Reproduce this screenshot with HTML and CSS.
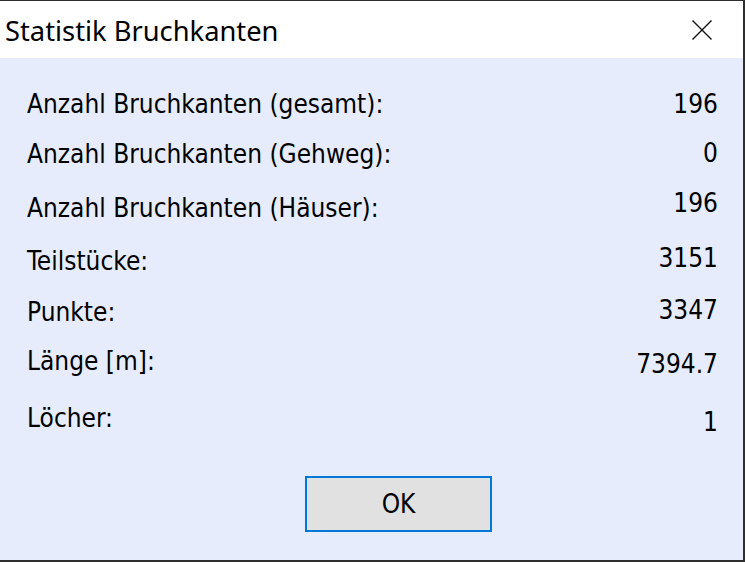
FILE: index.html
```html
<!DOCTYPE html>
<html lang="de">
<head>
<meta charset="utf-8">
<title>Statistik Bruchkanten</title>
<link rel="stylesheet" href="styles.css">
</head>
<body>
<div class="window">
  <div class="titlebar">
    <span class="title">Statistik Bruchkanten</span>
    <span class="close" aria-label="Schließen">
      <svg width="20" height="20" viewBox="0 0 20 20"><path d="M0.5 0.5 L19.5 19.5 M19.5 0.5 L0.5 19.5" stroke="#111" stroke-width="1.4" fill="none"/></svg>
    </span>
  </div>
  <div class="content">
    <div class="stats">
      <div class="labels">
        <div class="item">Anzahl Bruchkanten (gesamt):</div>
        <div class="item">Anzahl Bruchkanten (Gehweg):</div>
        <div class="item">Anzahl Bruchkanten (Häuser):</div>
        <div class="item">Teilstücke:</div>
        <div class="item">Punkte:</div>
        <div class="item">Länge [m]:</div>
        <div class="item">Löcher:</div>
      </div>
      <div class="values">
        <div class="item">196</div>
        <div class="item">0</div>
        <div class="item">196</div>
        <div class="item">3151</div>
        <div class="item">3347</div>
        <div class="item">7394.7</div>
        <div class="item">1</div>
      </div>
    </div>
    <div class="actions">
      <button class="ok" type="button">OK</button>
    </div>
  </div>
</div>
</body>
</html>
```
FILE: styles.css
```css
html, body {
  margin: 0;
  padding: 0;
  background: #2b2b2b;
}
.window {
  width: 743px;
  height: 559px;
  border-top: 1px solid #2e2e2e;
  border-right: 2px solid #2e2e2e;
  border-bottom: 2px solid #2e2e2e;
  background: #e6ecfc;
  display: flex;
  flex-direction: column;
  color: #000;
}
.titlebar {
  height: 57px;
  background: #ffffff;
  display: flex;
  align-items: center;
  justify-content: space-between;
  padding: 0 0 0 5px;
  flex: none;
}
.title {
  font-family: "Noto Sans", "Open Sans", sans-serif;
  font-size: 27.3px;
  line-height: 30px;
  padding-top: 2px;
}
.close {
  display: flex;
  width: 20px;
  height: 20px;
  margin-right: 31px;
}
.content {
  flex: 1;
  display: flex;
  flex-direction: column;
  font-family: "DejaVu Sans Condensed", "DejaVu Sans", sans-serif;
  font-size: 26px;
}
.stats {
  display: flex;
  justify-content: space-between;
  padding: 0 25px 0 27px;
}
.labels, .values {
  display: flex;
  flex-direction: column;
}
.values {
  align-items: flex-end;
}
.item {
  line-height: 30px;
  height: 30px;
  white-space: nowrap;
}
.labels .item:nth-child(1) { margin-top: 31px; }
.labels .item:nth-child(2) { margin-top: 20px; }
.labels .item:nth-child(3) { margin-top: 24px; }
.labels .item:nth-child(4) { margin-top: 23px; }
.labels .item:nth-child(5) { margin-top: 21px; }
.labels .item:nth-child(6) { margin-top: 19px; }
.labels .item:nth-child(7) { margin-top: 27px; }
.values .item:nth-child(1) { margin-top: 31px; }
.values .item:nth-child(2) { margin-top: 19px; }
.values .item:nth-child(3) { margin-top: 20px; }
.values .item:nth-child(4) { margin-top: 25px; }
.values .item:nth-child(5) { margin-top: 22px; }
.values .item:nth-child(6) { margin-top: 24px; }
.values .item:nth-child(7) { margin-top: 28px; }
.actions {
  margin-top: 39px;
  padding-left: 305px;
}
.ok {
  width: 187px;
  height: 56px;
  box-sizing: border-box;
  border: 2px solid #0078d7;
  background: #e1e1e1;
  font-family: "DejaVu Sans Condensed", "DejaVu Sans", sans-serif;
  font-size: 26px;
  color: #000;
  padding: 0;
  margin: 0;
  border-radius: 0;
}
```
